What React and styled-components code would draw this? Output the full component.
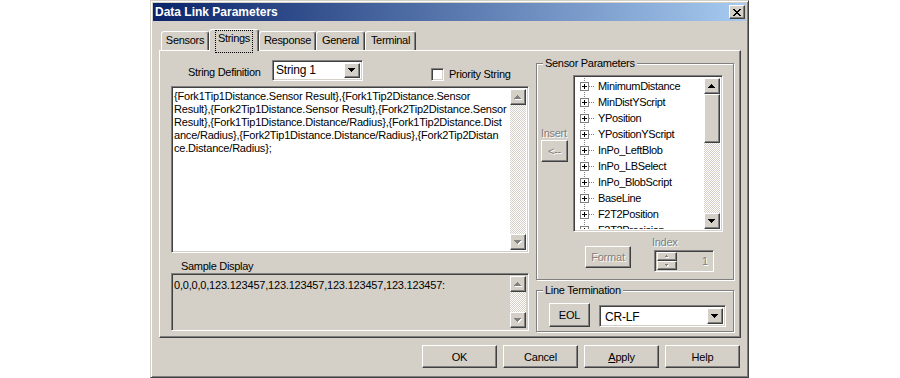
import styled, { createGlobalStyle, css } from "styled-components";

const GlobalStyle = createGlobalStyle`
  html, body {
    margin: 0;
    padding: 0;
    background: #fff;
  }
  body {
    font-family: "Liberation Sans", Arial, sans-serif;
    font-size: 11px;
    color: #000;
  }
`;

// classic 3d borders
const raised = css`
  box-sizing: border-box;
  border: 1px solid;
  border-color: #fff #404040 #404040 #fff;
  box-shadow: inset -1px -1px 0 #808080, inset 1px 1px 0 #d4d0c8;
  background: #d4d0c8;
`;

const sunken = css`
  box-sizing: border-box;
  border: 1px solid;
  border-color: #808080 #fff #fff #808080;
  box-shadow: inset 1px 1px 0 #404040, inset -1px -1px 0 #d4d0c8;
`;

const disabledText = css`
  color: #808080;
  text-shadow: 1px 1px 0 #fff;
`;

const checker = css`
  background-color: #fff;
  background-image: conic-gradient(#d4d0c8 25%, #fff 0 50%, #d4d0c8 0 75%, #fff 0);
  background-size: 2px 2px;
`;

const Window = styled.div`
  box-sizing: border-box;
  margin-left: 150px;
  width: 599px;
  height: 378px;
  background: #d4d0c8;
  border: 1px solid;
  border-color: #d4d0c8 #404040 #404040 #d4d0c8;
  box-shadow: inset 1px 1px 0 #fff, inset -1px -1px 0 #808080;
  padding: 2px;
  display: flex;
  flex-direction: column;
`;

const TitleBar = styled.div`
  height: 18px;
  flex: 0 0 18px;
  background: linear-gradient(to right, #0a246a, #a6caf0);
  display: flex;
  align-items: center;
  justify-content: space-between;
  padding-left: 2px;
  padding-right: 1px;
`;

const Title = styled.span`
  color: #fff;
  font-weight: bold;
  font-size: 12px;
  line-height: 18px;
`;

const CloseBtn = styled.div`
  ${raised};
  width: 16px;
  height: 14px;
  display: flex;
  align-items: center;
  justify-content: center;
`;

const TabRow = styled.div`
  display: flex;
  align-items: flex-end;
  height: 21px;
  margin-top: 8px;
  padding-left: 8px;
`;

const Tab = styled.div`
  box-sizing: border-box;
  position: relative;
  z-index: ${(p) => (p.$active ? 1 : 0)};
  width: ${(p) => p.$w}px;
  height: ${(p) => (p.$active ? 22 : 19)}px;
  margin-bottom: ${(p) => (p.$active ? -1 : 0)}px;
  border: 1px solid;
  border-bottom: none;
  border-color: #fff #404040 transparent #fff;
  border-radius: 3px 3px 0 0;
  box-shadow: inset -1px 0 0 #808080;
  background: #d4d0c8;
  display: flex;
  justify-content: center;
  padding-top: 2px;
  letter-spacing: -0.3px;
  line-height: 13px;
`;

const Focus = styled.span`
  outline: 1px dotted #000;
  outline-offset: 1px;
  padding: 0 1px;
`;

const Panel = styled.div`
  box-sizing: border-box;
  margin-left: 6px;
  width: 582px;
  height: 288px;
  border: 1px solid;
  border-color: #fff #404040 #404040 #fff;
  box-shadow: inset -1px -1px 0 #808080;
  padding: 9px 0 0 11px;
  display: grid;
  grid-template-columns: 358px 198px;
  column-gap: 7px;
  align-items: start;
`;

const Column = styled.div`
  display: flex;
  flex-direction: column;
`;

const TopRow = styled.div`
  display: flex;
  align-items: flex-start;
  height: 21px;
`;

const Label = styled.span`
  display: block;
  line-height: 13px;
  letter-spacing: -0.3px;
  white-space: nowrap;
  ${(p) => p.$disabled && disabledText};
`;

const DefLabel = styled(Label)`
  flex: 0 0 84px;
  margin-left: 17px;
  margin-top: 6px;
`;

const SampleLabel = styled(Label)`
  margin: 7px 0 0 10px;
`;

const CheckWrap = styled.div`
  display: flex;
  align-items: center;
  gap: 5px;
  margin: 8px 0 0 68px;
`;

const CheckBox = styled.div`
  ${sunken};
  width: 13px;
  height: 13px;
  background: #fff;
`;

const Combo = styled.div`
  ${sunken};
  width: ${(p) => p.$w}px;
  height: ${(p) => p.$h}px;
  margin: ${(p) => p.$m || 0};
  background: #fff;
  display: flex;
  padding: 2px;
`;

const ComboText = styled.div`
  flex: 1;
  padding: ${(p) => p.$pad || "1px 0 0 2px"};
  font-size: ${(p) => p.$fs || 11}px;
  line-height: 14px;
  letter-spacing: -0.2px;
`;

const DropBtn = styled.div`
  ${raised};
  width: 16px;
  display: flex;
  align-items: center;
  justify-content: center;
`;

const EditBox = styled.div`
  ${sunken};
  height: ${(p) => p.$h}px;
  margin-top: ${(p) => p.$mt || 0}px;
  background: ${(p) => (p.$readonly ? "#d4d0c8" : "#fff")};
  display: flex;
  padding: 2px;
`;

const EditText = styled.div`
  flex: 1;
  overflow: hidden;
  padding: ${(p) => p.$pt}px 0 0 0;
  font-size: 11px;
  line-height: 13px;
  letter-spacing: -0.2px;
  white-space: pre;
`;

const VScroll = styled.div`
  width: 16px;
  flex: 0 0 16px;
  display: flex;
  flex-direction: column;
  ${checker};
`;

const ScrollBtn = styled.div`
  ${raised};
  width: 16px;
  height: 16px;
  flex: 0 0 16px;
  display: flex;
  align-items: center;
  justify-content: center;
`;

const Track = styled.div`
  flex: 1;
`;

const Thumb = styled.div`
  ${raised};
  height: ${(p) => p.$h}px;
`;

const Group = styled.div`
  box-sizing: border-box;
  position: relative;
  height: ${(p) => p.$h}px;
  margin-top: ${(p) => p.$mt}px;
  border: 1px solid #808080;
  box-shadow: inset 1px 1px 0 #fff, 1px 1px 0 #fff;
  padding: ${(p) => p.$pad};
`;

const Legend = styled.span`
  position: absolute;
  top: -7px;
  left: 6px;
  padding: 0 2px;
  background: #d4d0c8;
  line-height: 13px;
  letter-spacing: -0.3px;
  white-space: nowrap;
`;

const Row = styled.div`
  display: flex;
  align-items: flex-start;
`;

const InsertCol = styled.div`
  width: 27px;
  margin-top: 52px;
  display: flex;
  flex-direction: column;
`;

const Button = styled.button`
  ${raised};
  width: ${(p) => p.$w}px;
  height: ${(p) => p.$h}px;
  margin: ${(p) => p.$m || 0};
  padding: 0;
  font-family: "Liberation Sans", Arial, sans-serif;
  font-size: 11px;
  letter-spacing: -0.2px;
  color: #000;
  cursor: default;
  ${(p) => p.disabled && disabledText};
`;

const ListBox = styled.div`
  ${sunken};
  width: 150px;
  height: 157px;
  margin-left: 5px;
  background: #fff;
  display: flex;
  padding: 2px;
`;

const TreeItems = styled.div`
  flex: 1;
  overflow: hidden;
`;

const TreeRow = styled.div`
  height: 16px;
  display: flex;
  align-items: center;
  white-space: nowrap;
  letter-spacing: -0.35px;
  line-height: 16px;
`;

const IndexCol = styled.div`
  display: flex;
  flex-direction: column;
  margin: 4px 0 0 21px;
`;

const Spin = styled.div`
  ${sunken};
  width: 60px;
  height: 22px;
  margin: 1px 0 0 2px;
  background: #d4d0c8;
  display: flex;
  align-items: center;
  padding: 2px;
`;

const SpinBtns = styled.div`
  display: flex;
  flex-direction: column;
  width: 20px;
`;

const SpinBtn = styled.div`
  ${raised};
  height: 9px;
  display: flex;
  align-items: center;
  justify-content: center;
`;

const SpinValue = styled.span`
  flex: 1;
  text-align: right;
  padding-right: 3px;
  ${disabledText};
`;

const Footer = styled.div`
  display: flex;
  justify-content: flex-end;
  gap: 6px;
  margin: 7px 6px 0 0;
`;

// pixel arrow: rows 7,5,3,1 for a 16px scroll button
const Arrow = ({ dir = "down", size = 4, disabled }) => {
  const w = size * 2 - 1;
  const rows = Array.from({ length: size }, (_, i) => {
    const y = dir === "down" ? i : size - 1 - i;
    return { x: i, y, w: w - 2 * i };
  });
  const draw = (dx, fill) =>
    rows.map((r) => (
      <rect key={`${dx}-${r.y}`} x={r.x + dx} y={r.y + dx} width={r.w} height={1} fill={fill} />
    ));
  return (
    <svg width={w + 1} height={size + 1} shapeRendering="crispEdges">
      {disabled ? (
        <>
          {draw(1, "#fff")}
          {draw(0, "#808080")}
        </>
      ) : (
        draw(0, "#000")
      )}
    </svg>
  );
};

const CloseGlyph = () => (
  <svg width="8" height="7" shapeRendering="crispEdges">
    {Array.from({ length: 7 }, (_, y) => (
      <g key={y}>
        <rect x={y} y={y} width={2} height={1} fill="#000" />
        <rect x={6 - y} y={y} width={2} height={1} fill="#000" />
      </g>
    ))}
  </svg>
);

const PlusNode = () => (
  <svg width="22" height="16" shapeRendering="crispEdges">
    <line x1="8.5" y1="0" x2="8.5" y2="16" stroke="#808080" strokeDasharray="1 1" />
    <line x1="13" y1="8.5" x2="19" y2="8.5" stroke="#808080" strokeDasharray="1 1" />
    <rect x="4.5" y="4.5" width="8" height="8" fill="#fff" stroke="#808080" />
    <rect x="6" y="8" width="5" height="1" fill="#000" />
    <rect x="8" y="6" width="1" height="5" fill="#000" />
  </svg>
);

const Scroll = ({ disabled, thumb }) => (
  <VScroll>
    <ScrollBtn>
      <Arrow dir="up" disabled={disabled} />
    </ScrollBtn>
    {thumb ? <Thumb $h={thumb} /> : null}
    <Track />
    <ScrollBtn>
      <Arrow dir="down" disabled={disabled} />
    </ScrollBtn>
  </VScroll>
);

const stringLines = [
  "{Fork1Tip1Distance.Sensor Result},{Fork1Tip2Distance.Sensor",
  "Result},{Fork2Tip1Distance.Sensor Result},{Fork2Tip2Distance.Sensor",
  "Result},{Fork1Tip1Distance.Distance/Radius},{Fork1Tip2Distance.Dist",
  "ance/Radius},{Fork2Tip1Distance.Distance/Radius},{Fork2Tip2Distan",
  "ce.Distance/Radius};",
];

const sensors = [
  "MinimumDistance",
  "MinDistYScript",
  "YPosition",
  "YPositionYScript",
  "InPo_LeftBlob",
  "InPo_LBSelect",
  "InPo_BlobScript",
  "BaseLine",
  "F2T2Position",
  "F2T2Precision",
];

const tabs = [
  { name: "Sensors", w: 48 },
  { name: "Strings", w: 50, active: true },
  { name: "Response", w: 57 },
  { name: "General", w: 49 },
  { name: "Terminal", w: 51 },
];

export default function App() {
  return (
    <>
      <GlobalStyle />
      <Window>
        <TitleBar>
          <Title>Data Link Parameters</Title>
          <CloseBtn>
            <CloseGlyph />
          </CloseBtn>
        </TitleBar>

        <TabRow>
          {tabs.map((t) => (
            <Tab key={t.name} $w={t.w} $active={t.active}>
              {t.active ? <Focus>{t.name}</Focus> : t.name}
            </Tab>
          ))}
        </TabRow>

        <Panel>
          <Column>
            <TopRow>
              <DefLabel>String Definition</DefLabel>
              <Combo $w={91} $h={21}>
                <ComboText $pad="0 0 0 1px" $fs={12}>String 1</ComboText>
                <DropBtn>
                  <Arrow dir="down" />
                </DropBtn>
              </Combo>
              <CheckWrap>
                <CheckBox />
                <Label>Priority String</Label>
              </CheckWrap>
            </TopRow>
            <EditBox $h={167} $mt={5}>
              <EditText $pt={1}>{stringLines.join("\n")}</EditText>
              <Scroll disabled />
            </EditBox>
            <SampleLabel>Sample Display</SampleLabel>
            <EditBox $h={58} $readonly>
              <EditText $pt={3}>0,0,0,0,123.123457,123.123457,123.123457,123.123457:</EditText>
              <Scroll disabled />
            </EditBox>
          </Column>

          <Column>
            <Group $h={217} $mt={3} $pad="11px 0 0 4px">
              <Legend>Sensor Parameters</Legend>
              <Row>
                <InsertCol>
                  <Label $disabled>Insert</Label>
                  <Button disabled $w={27} $h={22}>
                    &lt;--
                  </Button>
                </InsertCol>
                <ListBox>
                  <TreeItems>
                    {sensors.map((s) => (
                      <TreeRow key={s}>
                        <PlusNode />
                        {s}
                      </TreeRow>
                    ))}
                  </TreeItems>
                  <Scroll thumb={49} />
                </ListBox>
              </Row>
              <Row>
                <Button disabled $w={46} $h={22} $m="14px 0 0 44px">
                  Format
                </Button>
                <IndexCol>
                  <Label $disabled>Index</Label>
                  <Spin>
                    <SpinBtns>
                      <SpinBtn>
                        <Arrow dir="up" size={2} disabled />
                      </SpinBtn>
                      <SpinBtn>
                        <Arrow dir="down" size={2} disabled />
                      </SpinBtn>
                    </SpinBtns>
                    <SpinValue>1</SpinValue>
                  </Spin>
                </IndexCol>
              </Row>
            </Group>

            <Group $h={42} $mt={10} $pad="12px 0 0 12px">
              <Legend>Line Termination</Legend>
              <Row>
                <Button $w={41} $h={24}>
                  EOL
                </Button>
                <Combo $w={127} $h={22} $m="2px 0 0 9px">
                  <ComboText $pad="2px 0 0 3px" $fs={12}>CR-LF</ComboText>
                  <DropBtn>
                    <Arrow dir="down" />
                  </DropBtn>
                </Combo>
              </Row>
            </Group>
          </Column>
        </Panel>

        <Footer>
          <Button $w={75} $h={23}>OK</Button>
          <Button $w={75} $h={23}>Cancel</Button>
          <Button $w={75} $h={23}>
            <u>A</u>pply
          </Button>
          <Button $w={75} $h={23}>Help</Button>
        </Footer>
      </Window>
    </>
  );
}
